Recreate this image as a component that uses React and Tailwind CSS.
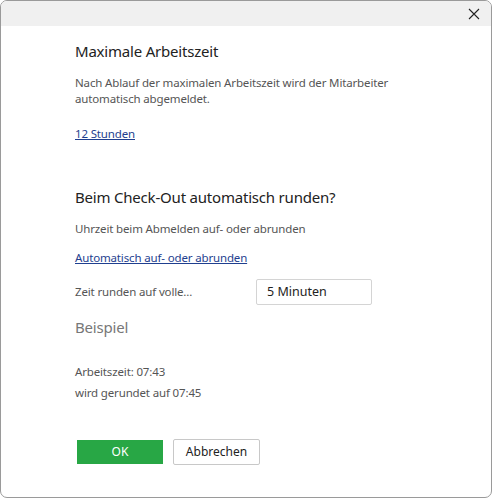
import React, { useState } from "react";

const font = { fontFamily: "'Noto Sans', 'Open Sans', sans-serif" };

export default function App() {
  const [minutes] = useState("5 Minuten");

  return (
    <div className="w-[492px] h-[498px] bg-white" style={font}>
      <div className="w-full h-full border border-[#9a9a9a] rounded-[7px] overflow-hidden flex flex-col bg-white">
        <div className="h-[25px] bg-[#f0f0f0] flex justify-end items-center pr-[11px]">
          <svg width="12" height="12" viewBox="0 0 12 12">
            <path d="M1 1 L11 11 M11 1 L1 11" stroke="#222" strokeWidth="1.1" />
          </svg>
        </div>

        <div className="pl-[74px] pr-6 flex flex-col">
          <h1 className="mt-[14px] text-[15px] leading-[22px] text-[#222] tracking-[-0.2px]">Maximale Arbeitszeit</h1>
          <p className="mt-[13px] text-[11.5px] leading-[16px] text-[#555] tracking-[-0.15px]">
            Nach Ablauf der maximalen Arbeitszeit wird der Mitarbeiter
            <br />
            automatisch abgemeldet.
          </p>
          <a href="#" className="mt-[19px] text-[11.5px] leading-[16px] text-[#1f3f8f] underline self-start tracking-[-0.15px]">
            12 Stunden
          </a>

          <h2 className="mt-[44px] text-[15px] leading-[22px] text-[#222] tracking-[-0.2px]">
            Beim Check-Out automatisch runden?
          </h2>
          <p className="mt-[13px] text-[11.5px] leading-[16px] text-[#555] tracking-[-0.15px]">
            Uhrzeit beim Abmelden auf- oder abrunden
          </p>
          <a href="#" className="mt-[13px] text-[11.5px] leading-[16px] text-[#1f3f8f] underline self-start tracking-[-0.15px]">
            Automatisch auf- oder abrunden
          </a>

          <div className="mt-[13px] flex items-center">
            <span className="w-[181px] text-[11.5px] leading-[16px] text-[#555] -mt-[1px] tracking-[-0.15px]">
              Zeit runden auf volle...
            </span>
            <div className="w-[116px] h-[26px] border border-[#d4d4d4] rounded-[2px] flex items-center pl-[10px] text-[12.5px] text-[#222]">
              {minutes}
            </div>
          </div>

          <h3 className="mt-[11px] text-[15px] leading-[22px] text-[#777] tracking-[-0.2px]">Beispiel</h3>

          <p className="mt-[26px] text-[11.5px] leading-[16px] text-[#555] tracking-[-0.15px]">Arbeitszeit: 07:43</p>
          <p className="mt-[5px] text-[11.5px] leading-[16px] text-[#555] tracking-[-0.15px]">wird gerundet auf 07:45</p>

          <div className="mt-[38px] flex items-center gap-[10px] pl-[2px]">
            <button className="w-[86px] h-[24px] bg-[#28a745] text-white text-[12px]">OK</button>
            <button className="w-[87px] h-[26px] border border-[#c8c8c8] rounded-[2px] bg-white text-[12px] text-[#222]">
              Abbrechen
            </button>
          </div>
        </div>
      </div>
    </div>
  );
}
